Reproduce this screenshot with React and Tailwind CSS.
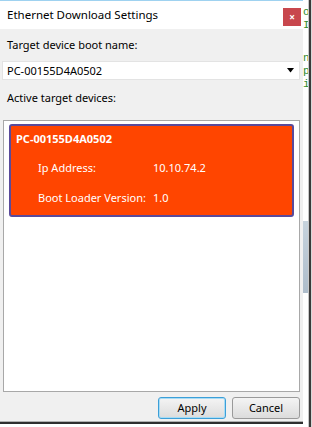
const font = { fontFamily: "'Noto Sans', 'Liberation Sans', sans-serif" };

function DeviceCard() {
  return (
    <div className="mx-[5px] mt-[3px] h-[93px] rounded-[3px] border-2 border-[#5a4a9a] bg-[#ff4500] text-white text-[11px] whitespace-nowrap">
      <div className="pl-[5px] pt-[5px] h-[22px] font-bold leading-[16px]">PC-00155D4A0502</div>
      <div className="mt-[12px] flex h-[16px] items-center leading-[16px]">
        <span className="pl-[27px] w-[142px]">Ip Address:</span>
        <span>10.10.74.2</span>
      </div>
      <div className="mt-[14px] flex h-[16px] items-center leading-[16px]">
        <span className="pl-[27px] w-[142px]">Boot Loader Version:</span>
        <span>1.0</span>
      </div>
    </div>
  );
}

function Button({ children, focused }) {
  return (
    <button
      className={`h-[22px] w-[68px] rounded-[3px] border text-[11px] text-black bg-gradient-to-b from-[#f4f4f4] to-[#dcdcdc] ${
        focused ? 'border-[#3c9fd8] shadow-[inset_0_0_0_1px_#a8dcf5]' : 'border-[#9a9a9a]'
      }`}
    >
      {children}
    </button>
  );
}

export default function App() {
  return (
    <div className="flex h-[427px] w-[312px] overflow-hidden bg-white" style={font}>
      {/* Dialog */}
      <div className="flex w-[303px] flex-col">
        <div className="flex h-[29px] items-center justify-between border-t border-[#9fd2f0] bg-white">
          <span className="pl-[7px] text-[11.5px] text-black">Ethernet Download Settings</span>
          <div className="mr-[2px] mt-[4px] flex h-[18px] w-[18px] items-center justify-center bg-[#c8474d] text-[10px] font-bold leading-none text-white">
            ×
          </div>
        </div>

        <div className="flex flex-1 flex-col bg-[#f0f0f0] text-[11px] text-black whitespace-nowrap">
          <div className="pl-[7px] pt-[8px] leading-[16px]">Target device boot name:</div>

          <div className="mx-[2px] mt-[8px] flex h-[19px] w-[298px] items-center justify-between border border-[#e3e3e3] bg-white">
            <span className="pl-[4px] leading-[16px]">PC-00155D4A0502</span>
            <svg width="8" height="5" viewBox="0 0 8 5" className="mr-[4px]">
              <path d="M0 0 H7 L3.5 4.5 Z" fill="#000" />
            </svg>
          </div>

          <div className="pl-[7px] pt-[10px] leading-[16px]">Active target devices:</div>

          <div className="mx-[3px] mt-[14px] h-[272px] w-[297px] border border-[#a8a8a8] bg-white">
            <DeviceCard />
          </div>

          <div className="flex justify-end gap-[6px] pr-[3px] pt-[5px]">
            <Button focused>Apply</Button>
            <Button>Cancel</Button>
          </div>
        </div>

        <div className="h-[1px] bg-[#b0b0b0]" />
        <div className="h-[2px] bg-[#2e2e2e]" />
        <div className="h-[3px] bg-white" />
      </div>

      {/* Window behind, right edge */}
      <div className="flex w-[9px] flex-col bg-white">
        <div className="flex flex-1">
          <div className="flex w-[5px] flex-col text-[11px] leading-[13px] text-[#2e8b2e]" style={{ fontFamily: "'Liberation Mono', monospace" }}>
            <span className="mt-[6px]">o</span>
            <span>I</span>
            <span className="mt-[20px]">n</span>
            <span>p</span>
            <span>i</span>
            <div className="mt-[130px] h-[72px] w-[5px] bg-gradient-to-b from-[#c7d3dd] to-[#aebdcb]" />
          </div>
          <div className="w-[1px] bg-[#c8c8c8]" />
          <div className="w-[2px] bg-[#3a3a3a]" />
          <div className="w-[1px] bg-[#d8d8d8]" />
        </div>
      </div>
    </div>
  );
}
